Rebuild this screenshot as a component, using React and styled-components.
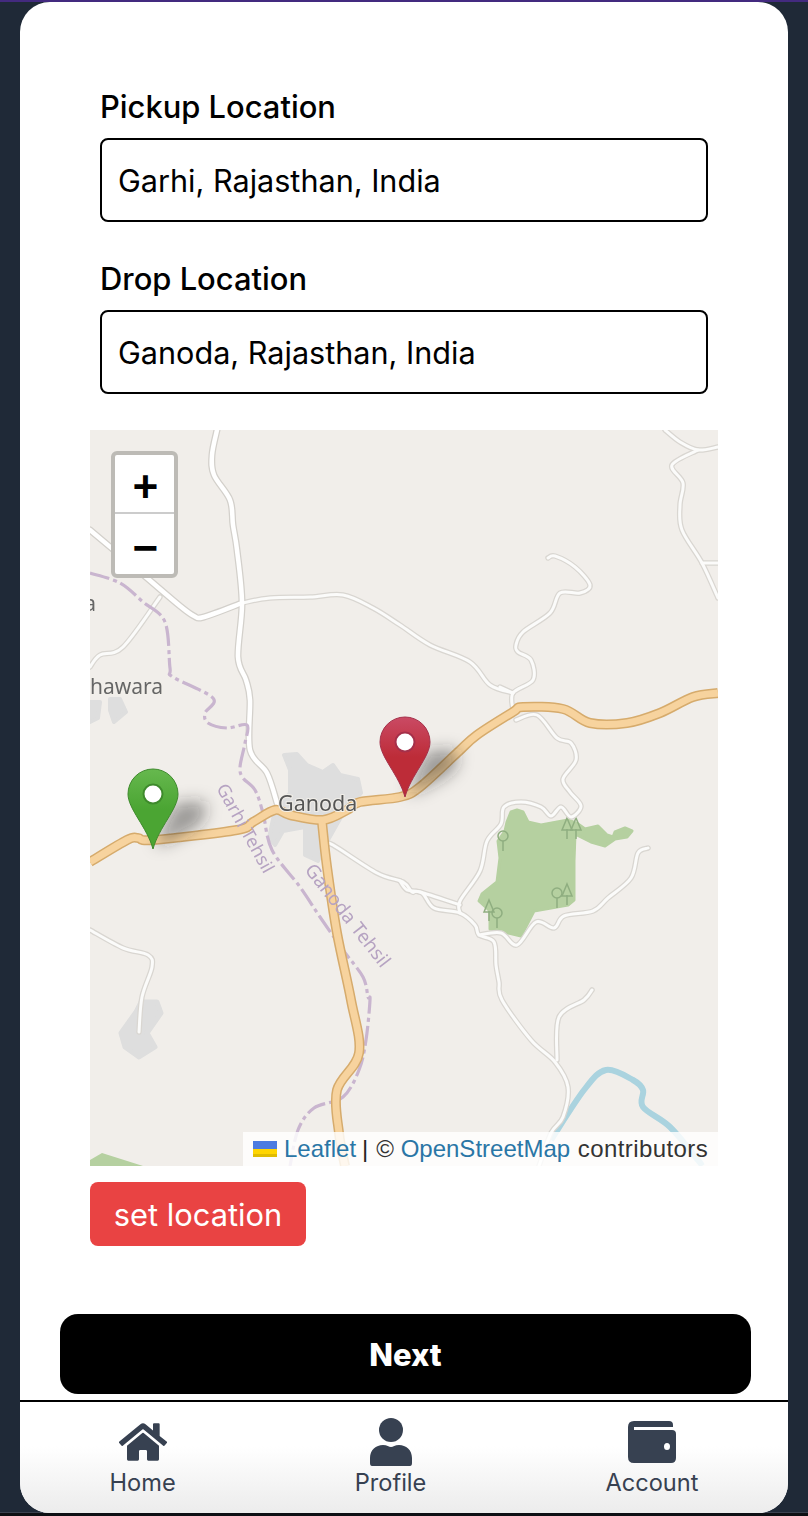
import React from 'react';
import styled, { createGlobalStyle } from 'styled-components';
import { FaHome } from 'react-icons/fa';

const Global = createGlobalStyle`
  html, body { margin: 0; padding: 0; background: #1f2937; }
  * { box-sizing: border-box; }
`;

const Page = styled.div`
  width: 808px;
  height: 1516px;
  padding: 0 20px;
  background: #1f2937;
  border-top: 2px solid #432a7f;
  box-shadow: inset 0 -3px #0d0f13, inset 0 -4px #3b4250;
  font-family: Inter, "Liberation Sans", sans-serif;
  overflow: hidden;
`;

const Card = styled.main`
  width: 768px;
  height: 1511px;
  background: #fff;
  border-radius: 30px;
  overflow: hidden;
  display: flex;
  flex-direction: column;
`;

const Form = styled.section`
  padding: 88px 80px 0 70px;
  display: flex;
  flex-direction: column;
`;

const Field = styled.div`
  padding: 0 0 0 10px;
  margin-right: -10px;
  margin-bottom: ${(p) => p.$gap}px;
  width: 618px;
`;

const Label = styled.label`
  display: block;
  font-size: 30.9px;
  font-weight: 500;
  line-height: 34px;
  color: #000;
  margin: 0 0 14px 0;
`;

const Input = styled.input`
  display: block;
  width: 608px;
  height: 84px;
  border: 2px solid #000;
  border-radius: 8px;
  padding: 0 16px;
  font-family: inherit;
  font-size: 30.6px;
  color: #000;
  background: #fff;
  outline: none;
`;

const MapBox = styled.div`
  position: relative;
  width: 628px;
  height: 736px;
  background: #f1eeea;
  overflow: hidden;
`;

const MapArt = styled.svg`
  display: block;
  width: 628px;
  height: 736px;
`;

const Zoom = styled.div`
  position: absolute;
  left: 21px;
  top: 21px;
  width: 67px;
  height: 127px;
  border: 4px solid #bdbbb6;
  border-radius: 6px;
  background: #fff;
  display: flex;
  flex-direction: column;
`;

const ZoomBtn = styled.span`
  flex: 1;
  display: flex;
  align-items: center;
  justify-content: center;
  padding: 13px 0 0 2px;
  font-family: "Liberation Mono", monospace;
  font-weight: 700;
  font-size: 44px;
  line-height: 1;
  color: #000;
  &:first-child { flex: none; height: 57px; }
  & + & { border-top: 2px solid #ccc; }
`;

const Attribution = styled.div`
  position: absolute;
  right: 0;
  bottom: 0;
  height: 34px;
  width: 475px;
  padding: 0 10px;
  display: flex;
  align-items: center;
  white-space: nowrap;
  background: rgba(255, 255, 255, 0.82);
  font-family: "Liberation Sans", Arial, sans-serif;
  font-size: 24px;
  color: #333;
`;

const Link = styled.span`
  color: #2a76a6;
`;

const Wide = styled.span`
  margin-left: 1px;
  letter-spacing: 0.42px;
`;

const Flag = styled.svg`
  width: 24px;
  height: 16px;
  margin-right: 7px;
  flex: none;
`;

const Sep = styled.span`
  margin: 0 8px 0 6px;
  color: #222;
`;

const SetButton = styled.button`
  align-self: flex-start;
  margin-top: 16px;
  width: 216px;
  height: 64px;
  border: none;
  border-radius: 8px;
  background: #e94343;
  color: #fff;
  font-family: inherit;
  font-size: 30.8px;
  padding: 0;
`;

const NextButton = styled.button`
  margin: 68px 0 0 40px;
  width: 691px;
  height: 80px;
  flex: none;
  border: none;
  border-radius: 18px;
  background: #000;
  color: #fff;
  font-family: inherit;
  font-size: 31px;
  font-weight: 800;
`;

const Nav = styled.nav`
  margin-top: 6px;
  flex: 1;
  border-top: 2px solid #000;
  padding-top: 16px;
  display: flex;
  justify-content: space-around;
  align-items: flex-start;
  background: linear-gradient(180deg, #ffffff 40%, #ececec 100%);
`;

const NavItem = styled.div`
  display: flex;
  flex-direction: column;
  align-items: center;
  color: #374151;
  font-size: 23.6px;
  line-height: 30px;
`;

const IconSlot = styled.div`
  height: 48px;
  margin-bottom: 2px;
  display: flex;
  align-items: center;
  justify-content: center;
  color: #374151;
`;

const PIN = 'M0 0 C-6 -22 -25 -40 -25 -55 A25 25 0 1 1 25 -55 C25 -40 6 -22 0 0 Z';

const Pin = ({ x, y, top, bottom, edge, id }) => (
  <g transform={`translate(${x} ${y})`}>
    <path d="M2 -4 L22 -46 L50 -48 Q58 -36 44 -22 L14 -6 Z" fill="rgba(40,40,40,.42)" filter="url(#shadow)" />
    <linearGradient id={id} x1="0" y1="0" x2="0" y2="1">
      <stop offset="0" stopColor={top} />
      <stop offset="0.5" stopColor={bottom} />
      <stop offset="1" stopColor={bottom} />
    </linearGradient>
    <path d={PIN} fill={`url(#${id})`} stroke={edge} strokeWidth="1" />
    <circle cx="0" cy="-55" r="9.5" fill="#fff" stroke={edge} strokeWidth="2" />
  </g>
);

/* Catmull-Rom smoothing, so that road polylines curve as rendered map tiles do */
const spline = (line) => {
  const p = line.trim().split(/[\s,]+/).map(Number);
  const pts = [];
  for (let i = 0; i < p.length; i += 2) pts.push([p[i], p[i + 1]]);
  let d = `M${pts[0][0]} ${pts[0][1]}`;
  for (let i = 0; i < pts.length - 1; i += 1) {
    const a = pts[Math.max(i - 1, 0)];
    const b = pts[i];
    const c = pts[i + 1];
    const e = pts[Math.min(i + 2, pts.length - 1)];
    const k = 6;
    d += ` C${b[0] + (c[0] - a[0]) / k} ${b[1] + (c[1] - a[1]) / k} ${c[0] - (e[0] - b[0]) / k} ${c[1] - (e[1] - b[1]) / k} ${c[0]} ${c[1]}`;
  }
  return d;
};

const major = [
  '217 430 212 455 214 475 230 500 233 525 237 550 242 603 238 657 246 680 250 700 250 750 267 773 277 803',
  '90 530 140 572 180 606 194 616 204 617 242 603',
].map(spline);

const minor = [
  '242 603 270 598 310 597 343 595 373 608 400 625 430 645 470 662 490 685 513 693',
  '160 597 123 647 100 655 90 667',
  '548 558 555 556 575 567 590 585 580 593 560 593 550 613 523 632 516 645 518 652 531 660 533 680 513 693 513 710',
  '500 687 513 693',
  '665 430 680 442 698 450 718 447',
  '698 450 672 465 683 483 680 505 682 530 702 563 718 598',
  '702 563 718 563',
  '516 720 537 715 557 738 571 743 576 760 563 779 570 792 581 806 571 817 561 807 551 816 541 807 521 802 504 807 501 824 487 841 480 871 460 901 460 913',
  '400 881 407 890 422 893 434 908 460 913 475 925 479 935 494 942 496 965 499 982 502 1000 531 1040 555 1062 568 1087 563 1117 551 1133 539 1166',
  '479 935 501 933 517 945 536 922 554 928 564 916 593 911 608 898 631 878 638 853 648 848',
  '327 845 333 845 377 873 403 882 412 892 420 892 460 905',
  '90 930 123 948 148 955 152 967 142 997 139 1032',
  '557 1060 559 1017 584 1000 592 990',
].map(spline);

const orange = [
  '90 862 127 840 138 838 153 840 237 830 253 822 275 810 290 815 323 820 347 810 360 802 400 797 420 787 457 753 477 735 513 712 523 707 563 709 590 723 627 723 660 713 693 697 718 693',
  '322 822 327 867 337 933 351 1000 359 1053 337 1090 339 1133 345 1166',
].map(spline);

const Tree = ({ x, y, round }) => (
  <g transform={`translate(${x} ${y})`} fill="none" stroke="#8fae80" strokeWidth="1.5">
    {round ? <circle cx="0" cy="-12" r="5" /> : <path d="M0 -18 L5 -6 L-5 -6 Z" />}
    <path d="M0 -7 V3" />
  </g>
);

const Map = () => (
  <MapBox>
    <MapArt viewBox="90 430 628 736">
      <defs>
        <filter id="soft" x="-5%" y="-5%" width="110%" height="110%"><feGaussianBlur stdDeviation="0.7" /></filter>
        <filter id="shadow" x="-50%" y="-50%" width="200%" height="200%"><feGaussianBlur stdDeviation="8" /></filter>
      </defs>
      <g filter="url(#soft)">
        <g strokeLinejoin="round">
          <path fill="#dedede" stroke="#dedede" strokeWidth="4" d="M284 755 L297 754 L307 765 L323 772 L333 765 L340 775 L358 779 L361 793 L341 817 L328 840 L318 861 L305 855 L305 827 L283 831 L275 845 L269 838 L275 810 L290 793 L290 770 Z" />
          <path fill="#dedede" stroke="#dedede" strokeWidth="4" d="M88 702 L100 702 L98 718 L88 723 Z M110 699 L120 699 L126 712 L114 722 L110 710 Z" />
          <path fill="#dedede" stroke="#dedede" strokeWidth="5" d="M141 1002 L157 1002 L161 1013 L147 1033 L155 1047 L139 1057 L125 1047 L121 1033 L136 1012 Z" />
          <path fill="#b5d0a0" stroke="#b5d0a0" strokeWidth="3" d="M511 812 L517 810 L523 812 L528 822 L541 825 L568 820 L578 824 L585 829 L598 826 L607 835 L613 837 L615 832 L625 828 L632 831 L627 837 L615 839 L605 846 L591 842 L575 834 L574 861 L574 900 L568 905 L534 911 L521 936 L504 932 L490 929 L490 911 L479 901 L482 894 L497 882 L500 858 L498 841 L505 831 L507 822 Z" />
          <path fill="#b5d0a0" d="M90 1160 L102 1153 L143 1166 L90 1166 Z" />
        </g>
        <Tree x={503} y={848} round />
        <Tree x={567} y={836} />
        <Tree x={576} y={836} />
        <Tree x={557} y={905} round />
        <Tree x={567} y={902} />
        <Tree x={497} y={925} round />
        <Tree x={489} y={918} />
        <path fill="none" stroke="#aad3df" strokeWidth="6" strokeLinejoin="round" d={spline('551 1140 584 1090 606 1070 633 1080 643 1090 643 1107 670 1127 698 1160 702 1166')} />
        <g fill="none" strokeLinejoin="round" strokeLinecap="round">
          {minor.map((d) => <path key={d} d={d} stroke="#d9d6d1" strokeWidth="5.5" />)}
          {major.map((d) => <path key={d} d={d} stroke="#d3d0cb" strokeWidth="7" />)}
          {minor.map((d) => <path key={d} d={d} stroke="#fbfbfa" strokeWidth="3" />)}
          {major.map((d) => <path key={d} d={d} stroke="#fff" strokeWidth="4.5" />)}
        </g>
        <path fill="none" stroke="#c9b5cf" strokeWidth="3.2" strokeDasharray="20 4 4 4" d={spline('90 573 120 583 143 602 165 622 170 668 173 677 213 698 205 713 208 723 227 728 247 725 245 743 240 767 243 778 255 790 263 813 272 850 300 887 320 917 343 950 363 977 368 997 370 1000 366 1040 359 1070 343 1097 314 1108 298 1130 290 1166')} />
        <g fill="none" strokeLinejoin="round">
          {orange.map((d) => <path key={d} d={d} stroke="#d6ab6c" strokeWidth="10" />)}
          {orange.map((d) => <path key={d} d={d} stroke="#f7d39e" strokeWidth="7" />)}
        </g>
        <g fontFamily='"Noto Sans", "Open Sans", sans-serif'>
          <text x="278" y="811" fontSize="21.5" fill="#555" stroke="#f2efe9" strokeWidth="2" paintOrder="stroke">Ganoda</text>
          <text x="90" y="694" fontSize="21" fill="#666" stroke="#f2efe9" strokeWidth="2" paintOrder="stroke">hawara</text>
          <text x="96" y="611" textAnchor="end" fontSize="21" fill="#666">a</text>
          <text transform="translate(216 788) rotate(61)" fontSize="18" fill="#b6a3c2">Garhi Tehsil</text>
          <text transform="translate(304 870) rotate(52)" fontSize="19" fill="#b6a3c2">Ganoda Tehsil</text>
        </g>
      </g>
      <Pin id="green" x={153} y={849} top="#66b84e" bottom="#4ba533" edge="#3e8a2c" />
      <Pin id="red" x={405} y={797} top="#ca4a64" bottom="#bd2c38" edge="#a5304a" />
    </MapArt>
    <Zoom>
      <ZoomBtn>+</ZoomBtn>
      <ZoomBtn>−</ZoomBtn>
    </Zoom>
    <Attribution>
      <Flag viewBox="0 0 24 16">
        <rect width="24" height="8" fill="#4c7be1" />
        <rect y="8" width="24" height="8" fill="#ffd500" />
        <rect y="13" width="24" height="3" fill="#e0bc00" />
      </Flag>
      <Link>Leaflet</Link>
      <Sep>|</Sep>
      ©&nbsp;<Link>OpenStreetMap</Link>&nbsp;<Wide>contributors</Wide>
    </Attribution>
  </MapBox>
);

const App = () => (
  <>
    <Global />
    <Page>
      <Card>
        <Form>
          <Field $gap={40}>
            <Label>Pickup Location</Label>
            <Input readOnly value="Garhi, Rajasthan, India" />
          </Field>
          <Field $gap={36}>
            <Label>Drop Location</Label>
            <Input readOnly value="Ganoda, Rajasthan, India" />
          </Field>
          <Map />
          <SetButton>set location</SetButton>
        </Form>
        <NextButton>Next</NextButton>
        <Nav>
          <NavItem>
            <IconSlot><FaHome size={48} /></IconSlot>
            Home
          </NavItem>
          <NavItem>
            <IconSlot>
              <svg width="42" height="48" viewBox="0 0 42 48" fill="currentColor">
                <ellipse cx="21" cy="12" rx="12" ry="12" />
                <path d="M2 48 Q0 48 0 45 V40 C0 32 6 27 13 27 C17 27 19 29 21 29 C23 29 25 27 29 27 C36 27 42 32 42 40 V45 Q42 48 40 48 Z" />
              </svg>
            </IconSlot>
            Profile
          </NavItem>
          <NavItem>
            <IconSlot>
              <svg width="48" height="42" viewBox="0 0 48 42" fill="currentColor">
                <path fillRule="evenodd" d="M6 0 H41 Q45 0 45 4 V6 H6 V9 H44 Q48 9 48 13 V37 Q48 42 43 42 H6 Q0 42 0 36 V6 Q0 0 6 0 Z M39 22 A3 3.5 0 1 0 39 29 A3 3.5 0 1 0 39 22 Z" />
              </svg>
            </IconSlot>
            Account
          </NavItem>
        </Nav>
      </Card>
    </Page>
  </>
);

export default App;
